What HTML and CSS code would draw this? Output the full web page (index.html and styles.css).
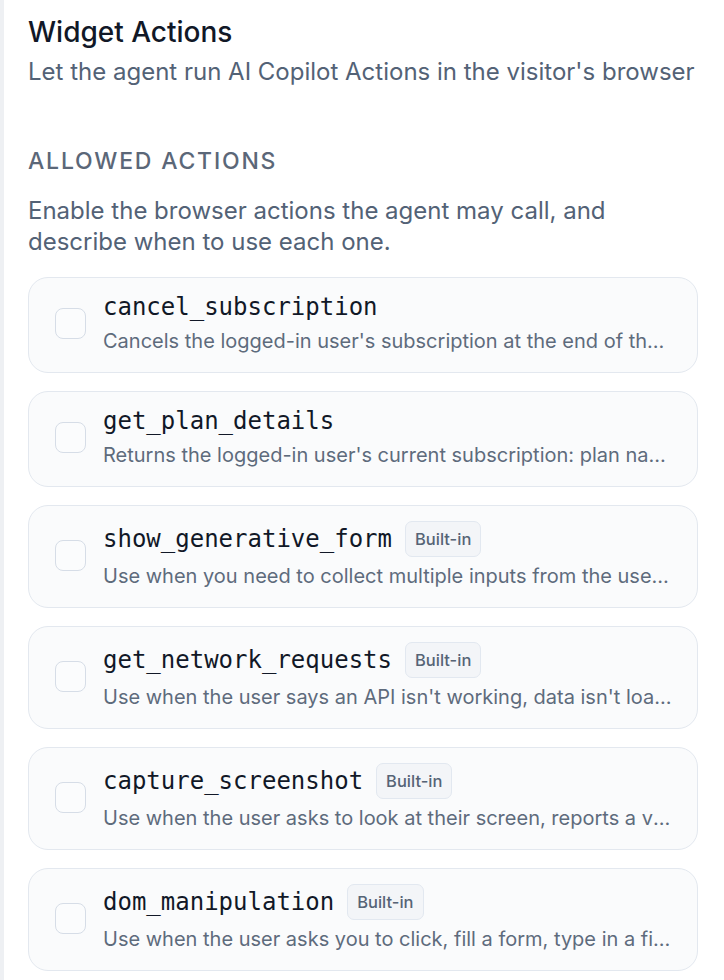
FILE: index.html
```html
<!DOCTYPE html>
<html lang="en">
<head>
<meta charset="utf-8">
<title>Widget Actions</title>
<link rel="stylesheet" href="styles.css">
</head>
<body>
<div class="panel">
  <header class="head">
    <h1 class="title">Widget Actions</h1>
    <p class="subtitle">Let the agent run AI Copilot Actions in the visitor's browser</p>
  </header>
  <section class="section">
    <h2 class="label">Allowed actions</h2>
    <p class="desc">Enable the browser actions the agent may call, and describe when to use each one.</p>
    <ul class="list">
      <li class="card">
        <span class="check"></span>
        <div class="body">
          <div class="name-row"><code class="name">cancel_subscription</code></div>
          <p class="info">Cancels the logged-in user's subscription at the end of the current billing period.</p>
        </div>
      </li>
      <li class="card">
        <span class="check"></span>
        <div class="body">
          <div class="name-row"><code class="name">get_plan_details</code></div>
          <p class="info">Returns the logged-in user's current subscription: plan name, price and renewal date.</p>
        </div>
      </li>
      <li class="card">
        <span class="check"></span>
        <div class="body">
          <div class="name-row"><code class="name">show_generative_form</code><span class="badge">Built-in</span></div>
          <p class="info">Use when you need to collect multiple inputs from the user at once.</p>
        </div>
      </li>
      <li class="card">
        <span class="check"></span>
        <div class="body">
          <div class="name-row"><code class="name">get_network_requests</code><span class="badge">Built-in</span></div>
          <p class="info">Use when the user says an API isn't working, data isn't loading or a request fails.</p>
        </div>
      </li>
      <li class="card">
        <span class="check"></span>
        <div class="body">
          <div class="name-row"><code class="name">capture_screenshot</code><span class="badge">Built-in</span></div>
          <p class="info">Use when the user asks to look at their screen, reports a visual bug or layout issue.</p>
        </div>
      </li>
      <li class="card">
        <span class="check"></span>
        <div class="body">
          <div class="name-row"><code class="name">dom_manipulation</code><span class="badge">Built-in</span></div>
          <p class="info">Use when the user asks you to click, fill a form, type in a field or scroll the page.</p>
        </div>
      </li>
    </ul>
  </section>
</div>
</body>
</html>
```

FILE: styles.css
```css
html, body {
  margin: 0;
  padding: 0;
  background: #ffffff;
}

body {
  font-family: "Inter", "Liberation Sans", sans-serif;
  color: #0f172a;
}

.panel {
  border-left: 4px solid #eef0f3;
  padding: 14px 26px 0 24px;
  min-height: 980px;
  box-sizing: border-box;
}

.title {
  margin: 0;
  font-size: 28px;
  line-height: 36px;
  font-weight: 500;
  color: #111827;
}

.subtitle {
  margin: 5.5px 0 0;
  font-size: 24px;
  line-height: 32px;
  color: #536276;
}

.section {
  margin-top: 57.5px;
}

.label {
  margin: 0;
  font-size: 23px;
  line-height: 32px;
  font-weight: 500;
  letter-spacing: 1.8px;
  text-transform: uppercase;
  color: #5b6778;
}

.desc {
  margin: 18px 0 0;
  font-size: 24px;
  line-height: 31px;
  color: #536276;
}

.list {
  list-style: none;
  margin: 20px 0 0;
  padding: 0;
  display: flex;
  flex-direction: column;
  gap: 18px;
}

.card {
  display: flex;
  align-items: center;
  gap: 17px;
  padding: 13px 25px 16px 26px;
  border: 1.5px solid #e3e8ef;
  border-radius: 20px;
  background: #fafbfc;
}

.check {
  flex: none;
  width: 31px;
  height: 31px;
  box-sizing: border-box;
  border: 1.5px solid #d6dde7;
  border-radius: 8px;
  background: #fbfcfd;
}

.body {
  flex: 1;
  min-width: 0;
}

.name-row {
  display: flex;
  align-items: center;
  gap: 13px;
  min-height: 32px;
}

.name {
  font-family: "DejaVu Sans Mono", "Liberation Mono", monospace;
  font-size: 24px;
  line-height: 32px;
  color: #111827;
}

.badge {
  display: inline-flex;
  align-items: center;
  height: 36px;
  margin: 1.5px 0;
  box-sizing: border-box;
  padding: 0 9px;
  border: 1.5px solid #e2e8f0;
  border-radius: 7px;
  background: #f3f5f8;
  font-size: 16.5px;
  font-weight: 500;
  color: #566476;
}

.info {
  margin: 3px 0 0;
  font-size: 20px;
  line-height: 30px;
  color: #5e6b7c;
  white-space: nowrap;
  overflow: hidden;
  text-overflow: ellipsis;
}
```
